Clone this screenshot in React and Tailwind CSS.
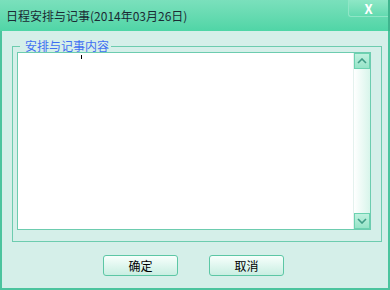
import React from "react";

const font = { fontFamily: '"Noto Sans CJK SC", "Liberation Sans", sans-serif' };

const ScrollBtn = ({ up }) => (
  <div className="w-[16px] h-[16px] border border-[#6cd2b0] bg-gradient-to-b from-[#bff1df] to-[#96e4c8] flex items-center justify-center">
    <svg width="10" height="6" viewBox="0 0 10 6">
      <path
        d={up ? "M1 5 L5 1 L9 5" : "M1 1 L5 5 L9 1"}
        fill="none"
        stroke="#3f9c86"
        strokeWidth="1.6"
      />
    </svg>
  </div>
);

const Button = ({ children }) => (
  <button className="w-[75px] h-[21px] rounded-[3px] border border-[#5cc7a5] bg-gradient-to-b from-[#f7fffc] to-[#c9eee2] text-[12px] leading-none text-black flex items-center justify-center">
    {children}
  </button>
);

export default function App() {
  return (
    <div className="w-[390px] h-[290px] flex flex-col overflow-hidden bg-[#d5efe9]" style={font}>
      {/* title bar */}
      <div className="h-[31px] flex items-start bg-gradient-to-b from-[#7ae0bc] to-[#4fd5a6] border-r-2 border-[#3fb58e]">
        <span className="ml-[6px] mt-[10px] text-[12px] leading-[12px] text-[#1b2b34]">
          日程安排与记事(2014年03月26日)
        </span>
        <div className="ml-auto w-[40px] h-[17px] rounded-bl-[3px] border-l border-b border-[#8fe6c6] bg-gradient-to-b from-[#8ee7c6] to-[#62dab0] flex items-center justify-center">
          <span className="text-white font-bold text-[13px] leading-none">X</span>
        </div>
      </div>

      {/* body */}
      <div className="flex-1 flex flex-col border-l-2 border-r-2 border-b-2 border-[#4cc49e]">
        <div className="relative ml-[10px] mt-[15px] w-[370px] h-[196px] border border-[#6dccaf] pl-[4px] pt-[5px]">
          <span className="absolute left-[7px] top-[-7px] pl-[5px] pr-[2px] bg-[#d5efe9] text-[12px] leading-[12px] text-[#3f6ef2]">
            安排与记事内容
          </span>
          <div className="relative w-[354px] h-[178px] border border-[#6dccaf] bg-white flex">
            <div className="absolute left-[63px] top-[2px] w-[1px] h-[4px] bg-black" />
            <div className="ml-auto w-[17px] h-full flex flex-col items-end border-l border-[#e4f2ee] bg-gradient-to-r from-[#ffffff] to-[#d8f5eb]">
              <ScrollBtn up />
              <div className="flex-1" />
              <ScrollBtn />
            </div>
          </div>
        </div>

        <div className="mt-[13px] flex gap-[31px] pl-[101px]">
          <Button>确定</Button>
          <Button>取消</Button>
        </div>
      </div>
    </div>
  );
}
